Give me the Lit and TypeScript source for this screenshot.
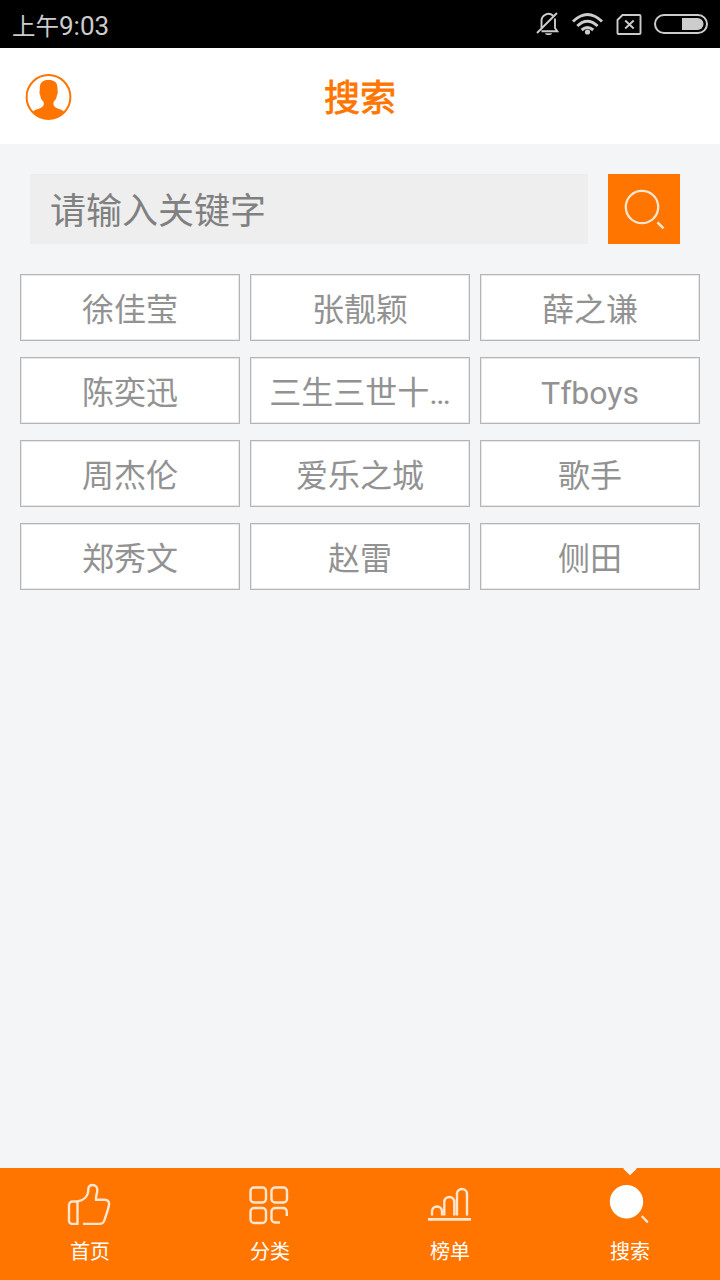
import { LitElement, html, svg, css } from "lit";
import { customElement, property } from "lit/decorators.js";

const KEYWORDS = [
  "徐佳莹", "张靓颖", "薛之谦",
  "陈奕迅", "三生三世十…", "Tfboys",
  "周杰伦", "爱乐之城", "歌手",
  "郑秀文", "赵雷", "侧田",
];

const TAB_ICONS = {
  home: svg`
    <path d="M27.500 41.500C34 40.500 38.300 36 38.300 29.500C38.300 26.500 40 25 42.700 25C45.500 25 47.500 27 47.300 30.500C47.200 34 45.500 36.500 46 39.700H54.500C58 39.700 59.700 42 58.900 45.500C58 50.500 56 55 54.700 59.500C53.700 62.800 52.800 63.900 49.500 63.900H33"/>
    <path d="M27.500 41.500v22.400H22a3 3 0 0 1-3-3V45a3.500 3.500 0 0 1 3.500-3.500z"/>`,
  category: svg`
    <rect x="20.500" y="27.500" width="15.500" height="15" rx="3.500"/>
    <rect x="41.500" y="27.500" width="15.500" height="15" rx="3.500"/>
    <rect x="20.500" y="48" width="15.500" height="15" rx="3.500"/>
    <path d="M56.800 56v-4.500a3.500 3.500 0 0 0-3.500-3.500H45a3.500 3.500 0 0 0-3.500 3.500V59a3.500 3.500 0 0 0 3.500 3.500h5"/>`,
  chart: svg`
    <path d="M22 55.500V51.500a5 5 0 0 1 10 0v4M34.300 55.500V42a5 5 0 0 1 10 0v13.500M47 55.500V34a5 5 0 0 1 10 0v21.500"/>
    <path d="M18 59.300h43" stroke-width="2.800"/>`,
  search: svg`
    <circle cx="36.500" cy="41.700" r="16.700" fill="#fff" stroke="none"/>
    <path d="M51.800 56l6 6.500"/>`,
};

@customElement("status-bar")
class StatusBar extends LitElement {
  static styles = css`
    :host { display: flex; height: 48px; background: #000; color: #ccc; align-items: center; justify-content: space-between; }
    .time { padding: 4px 0 0 12px; font: 26px/48px Roboto, "Noto Sans CJK SC", sans-serif; white-space: nowrap; }
    .period { font-size: 23.5px; }
    svg { display: block; }
  `;
  render() {
    return html`
      <div class="time"><span class="period">上午</span>9:03</div>
      <svg width="200" height="48" viewBox="0 0 200 48" fill="none" stroke="#ccc" stroke-width="1.900">
        <path d="M21.500 28V21a7 7 0 0 1 11.500-5.500M35 18.500V28l2.300 3.200H21.500M17 33L37 13"/>
        <path d="M25 33.200h7a3.500 1.800 0 0 1-7 0z" fill="#ccc" stroke="none"/>
        <path d="M53 21.500q14.500-14 29 0M57.300 26q10-9.500 20.300 0M61.700 30q5.700-5 11.500 0" stroke-width="3"/>
        <circle cx="67.500" cy="32" r="2.600" fill="#ccc" stroke="none"/>
        <path d="M102.500 15h17a1 1 0 0 1 1 1v17a1 1 0 0 1-1 1h-21a1 1 0 0 1-1-1V20z"/>
        <path d="M105.200 20.500l8.500 8M113.700 20.500l-8.500 8" stroke-width="1.900"/>
        <rect x="135" y="15" width="52" height="18" rx="9" stroke-width="2"/>
        <path d="M162 18h15.500a6 6 0 0 1 0 12H162z" fill="#ccc" stroke="none"/>
      </svg>
    `;
  }
}

@customElement("tab-item")
class TabItem extends LitElement {
  @property() label = "";
  @property() icon: keyof typeof TAB_ICONS = "home";
  @property({ type: Boolean }) active = false;

  static styles = css`
    :host { display: block; position: relative; height: 112px; color: #fff; }
    .icon { display: block; margin: 0 auto; }
    .label { text-align: center; font: 20px/24px Roboto, "Noto Sans CJK SC", sans-serif; }
    .notch { position: absolute; top: 0; left: 50%; margin-left: -7px; display: block; }
  `;
  render() {
    return html`
      <svg class="icon" width="80" height="72" viewBox="0 8 80 72" fill="none" stroke="#ffe6d0" stroke-width="2.400">
        ${TAB_ICONS[this.icon]}
      </svg>
      <div class="label">${this.label}</div>
      ${this.active
        ? html`<svg class="notch" width="14" height="8" viewBox="0 0 14 8"><path d="M0.500 0h13v1L7 7.200L0.500 1z" fill="#f3f5f7"/></svg>`
        : null}
    `;
  }
}

@customElement("app-root")
class AppRoot extends LitElement {
  static styles = css`
    :host { display: flex; flex-direction: column; height: 1280px; width: 720px; background: #f3f5f7; font-family: Roboto, "Noto Sans CJK SC", sans-serif; }
    .header { display: grid; grid-template-columns: 96px 1fr 96px; height: 96px; background: #fff; align-items: center; }
    .avatar { display: block; margin: 2px 0 0 25px; }
    .title { margin: 0; padding-top: 5px; text-align: center; color: #ff7500; font-size: 36px; line-height: 48px; font-weight: 400; -webkit-text-stroke: 0.8px #ff7500; }
    .main { flex: 1; }
    .search { display: flex; gap: 20px; padding: 30px 40px 30px 30px; }
    .field { flex: 1; height: 70px; line-height: 77px; padding-left: 20px; background: #eee; color: #808080; font-size: 36px; }
    .button { width: 72px; height: 70px; background: #ff7500; }
    .button svg { display: block; }
    .tags { display: grid; grid-template-columns: repeat(3, 220px); gap: 16px 10px; padding: 0 20px; }
    .tag { box-sizing: border-box; height: 67px; border: 1px solid #b5b5b5; box-shadow: inset 0 0 0 1px #e8e8e8; background: #fff; color: #929292; font-size: 32px; line-height: 70px; text-align: center; white-space: nowrap; }
    .tabs { display: grid; grid-template-columns: repeat(4, 1fr); background: #ff7500; height: 112px; }
  `;
  render() {
    return html`
      <status-bar></status-bar>
      <header class="header">
        <svg class="avatar" width="48" height="48" viewBox="0 0 48 48" fill="#ff7500">
          <circle cx="23.500" cy="24" r="21.900" fill="none" stroke="#ff7500" stroke-width="2"/>
          <path d="M8 38.500C11 35.500 18.500 35.500 18.700 31.500V29C16.500 27 15.500 25 15.200 22C14.200 20.500 14.300 19 14.800 17.500C14.300 10 17 7 23.500 7C30.300 7 33 10 32.500 17.500C33 19 32.900 20.500 32 22C31.700 25 30.500 27 28.500 29V31.500C28.700 35.500 36 35.500 39 38.500C32 48.500 15 48.500 8 38.500z"/>
        </svg>
        <h1 class="title">搜索</h1>
      </header>
      <main class="main">
        <div class="search">
          <div class="field">请输入关键字</div>
          <div class="button">
            <svg width="72" height="70" viewBox="0 0 72 70" fill="none" stroke="#ffe6d0" stroke-width="2.300">
              <circle cx="34" cy="33" r="16.200"/>
              <path d="M49.500 48.300l6 6" stroke-width="2.600"/>
            </svg>
          </div>
        </div>
        <div class="tags">${KEYWORDS.map((k) => html`<div class="tag">${k}</div>`)}</div>
      </main>
      <nav class="tabs">
        <tab-item label="首页" icon="home"></tab-item>
        <tab-item label="分类" icon="category"></tab-item>
        <tab-item label="榜单" icon="chart"></tab-item>
        <tab-item label="搜索" icon="search" active></tab-item>
      </nav>
    `;
  }
}
